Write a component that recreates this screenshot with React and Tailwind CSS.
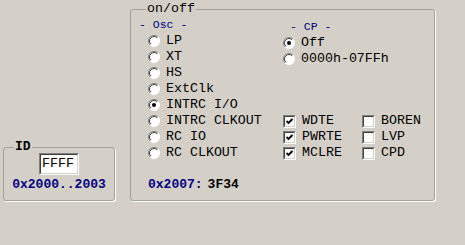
import React from 'react';

const mono = "font-['Liberation_Mono','Courier_New',monospace]";

const Radio = ({ checked }) => (
  <svg width="12" height="12" viewBox="0 0 12 12" className="shrink-0">
    <circle cx="6" cy="6" r="5.5" fill="#ffffff" />
    <path d="M2.1 9.9 A5.5 5.5 0 0 1 9.9 2.1" fill="none" stroke="#808080" strokeWidth="1" />
    <path d="M2.8 9.2 A4.5 4.5 0 0 1 9.2 2.8" fill="none" stroke="#404040" strokeWidth="1" />
    <path d="M9.9 2.1 A5.5 5.5 0 0 1 2.1 9.9" fill="none" stroke="#ffffff" strokeWidth="1" />
    {checked && <circle cx="6" cy="6" r="2" fill="#000000" />}
  </svg>
);

const Check = ({ checked }) => (
  <div className="w-[13px] h-[13px] shrink-0 border border-t-[#808080] border-l-[#808080] border-b-white border-r-white">
    <div className="w-full h-full bg-white border border-t-[#404040] border-l-[#404040] border-b-[#d4d0c8] border-r-[#d4d0c8] flex items-center justify-center">
      {checked && (
        <svg width="9" height="9" viewBox="0 0 9 9">
          <path d="M1.5 4 L3.5 6 L7.5 2" fill="none" stroke="#000000" strokeWidth="1.8" />
        </svg>
      )}
    </div>
  </div>
);

const RadioRow = ({ label, checked }) => (
  <div className="flex h-4 items-center gap-[6px]">
    <Radio checked={checked} />
    <span className="whitespace-pre">{label}</span>
  </div>
);

const CheckRow = ({ label, checked }) => (
  <div className="flex h-4 items-center gap-[6px]">
    <Check checked={checked} />
    <span className="whitespace-pre">{label}</span>
  </div>
);

const osc = ['LP', 'XT', 'HS', 'ExtClk', 'INTRC I/O', 'INTRC CLKOUT', 'RC IO', 'RC CLKOUT'];

export default function App() {
  return (
    <div className={`w-[465px] h-[245px] bg-[#d4d0c8] text-black ${mono} text-[13.3px] leading-4 flex items-start gap-[15px] pt-[9px] pl-[3px]`}>
      {/* ID */}
      <div className="relative mt-[138px] w-[112px] h-[54px] border border-[#a3a29b] rounded-[3px] shadow-[1px_1px_0_#ffffff] flex flex-col items-center pt-[5px]">
        <span className="absolute -top-[9px] left-[10px] px-[1px] bg-[#d4d0c8] font-bold text-[13px]">ID</span>
        <div className="w-[40px] h-[22px] border border-t-[#808080] border-l-[#808080] border-b-white border-r-white">
          <div className="w-full h-full bg-white border border-t-[#404040] border-l-[#404040] border-b-[#d4d0c8] border-r-[#d4d0c8] flex items-center pl-[1px]">
            FFFF
          </div>
        </div>
        <div className="mt-[2px] font-bold text-[13px] text-[#000080]">0x2000..2003</div>
      </div>

      {/* on/off */}
      <div className="relative w-[305px] h-[192px] border border-[#a3a29b] rounded-[3px] shadow-[1px_1px_0_#ffffff] pt-[7px] pl-[8px]">
        <span className="absolute -top-[9px] left-[15px] px-[1px] bg-[#d4d0c8]">on/off</span>

        <div className="flex">
          <div className="w-[144px] flex flex-col">
            <div className="h-4 flex items-center text-[11.5px] text-[#000080] whitespace-pre">- Osc -</div>
            <div className="pl-[9px] flex flex-col">
              {osc.map((o) => (
                <RadioRow key={o} label={o} checked={o === 'INTRC I/O'} />
              ))}
            </div>
          </div>

          <div className="flex-1 flex flex-col">
            <div className="pt-[2px] flex flex-col">
              <div className="h-4 flex items-center pl-[7px] text-[11.5px] text-[#000080] whitespace-pre">- CP -</div>
              <RadioRow label="Off" checked />
              <RadioRow label="0000h-07FFh" />
            </div>
            <div className="mt-auto grid grid-cols-[79px_1fr]">
              <CheckRow label="WDTE" checked />
              <CheckRow label="BOREN" />
              <CheckRow label="PWRTE" checked />
              <CheckRow label="LVP" />
              <CheckRow label="MCLRE" checked />
              <CheckRow label="CPD" />
            </div>
          </div>
        </div>

        <div className="mt-4 pl-[9px] flex h-4 items-center gap-[5px] font-bold text-[13px]">
          <span className="text-[#000080]">0x2007:</span>
          <span>3F34</span>
        </div>
      </div>
    </div>
  );
}
